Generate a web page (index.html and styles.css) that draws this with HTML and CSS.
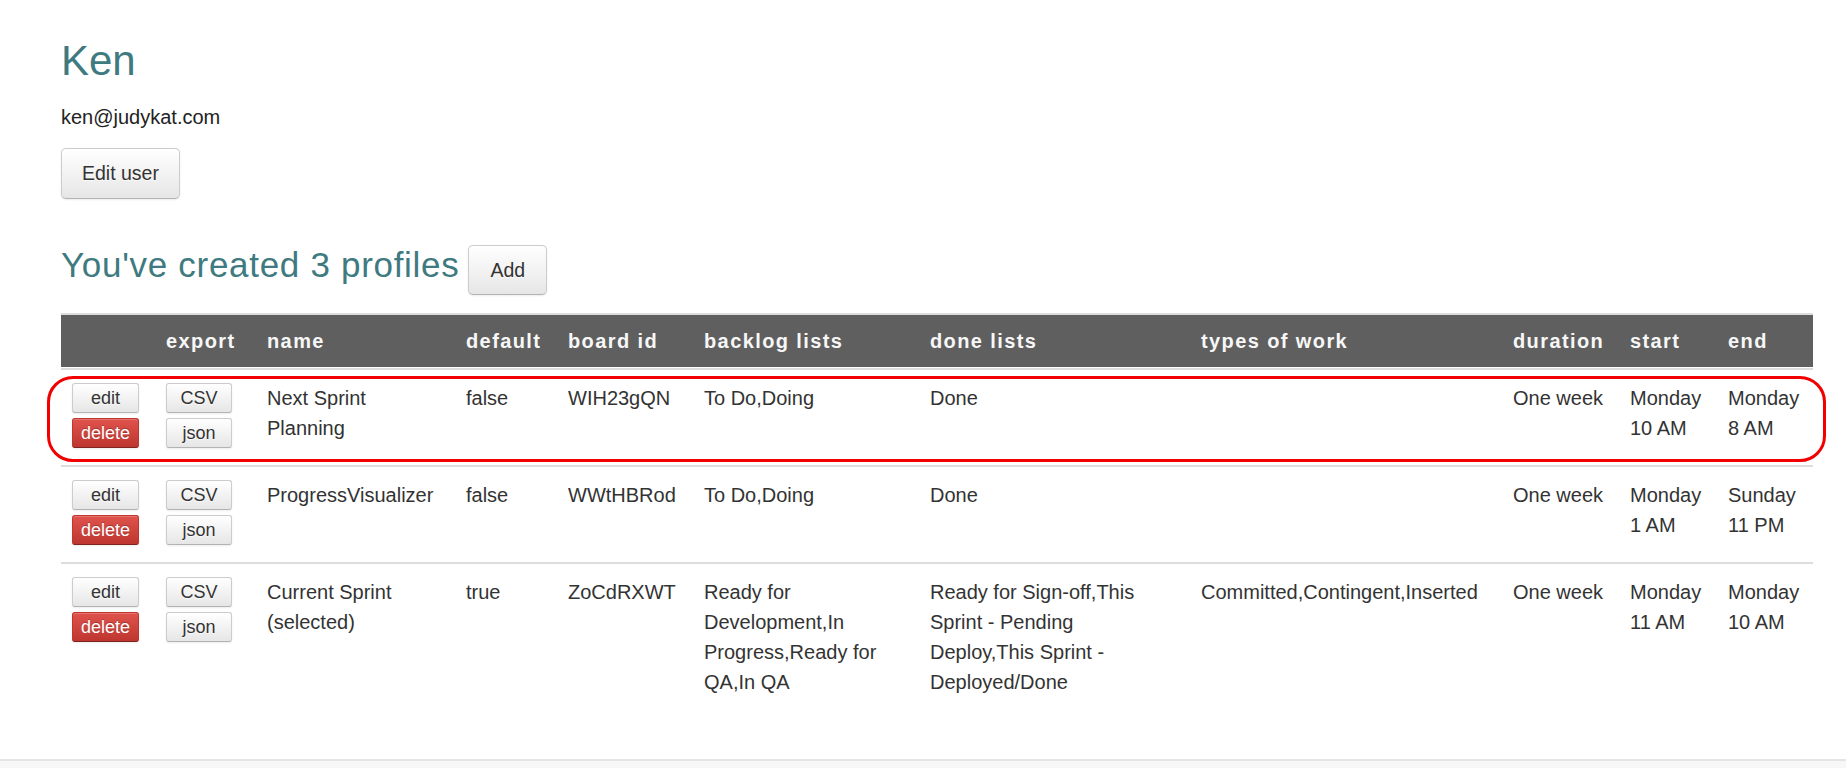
FILE: index.html
```html
<!DOCTYPE html>
<html lang="en">
<head>
<meta charset="utf-8">
<title>Ken - profiles</title>
<link rel="stylesheet" href="styles.css">
</head>
<body>
<div class="page">
  <h1 class="user-name">Ken</h1>
  <p class="email">ken@judykat.com</p>
  <button class="btn btn-lg">Edit user</button>

  <div class="profiles-head">
    <h2 class="profiles-title">You've created 3 profiles</h2>
    <button class="btn btn-lg">Add</button>
  </div>

  <div class="table-wrap">
    <table class="profiles">
      <colgroup>
        <col class="c-actions">
        <col class="c-export">
        <col class="c-name">
        <col class="c-default">
        <col class="c-board">
        <col class="c-backlog">
        <col class="c-done">
        <col class="c-types">
        <col class="c-duration">
        <col class="c-start">
        <col class="c-end">
      </colgroup>
      <thead>
        <tr>
          <th></th>
          <th>export</th>
          <th>name</th>
          <th>default</th>
          <th>board id</th>
          <th>backlog lists</th>
          <th>done lists</th>
          <th>types of work</th>
          <th>duration</th>
          <th>start</th>
          <th>end</th>
        </tr>
      </thead>
      <tbody>
        <tr>
          <td><div class="stack"><button class="btn btn-sm">edit</button><button class="btn btn-sm btn-danger">delete</button></div></td>
          <td><div class="stack"><button class="btn btn-sm btn-export">CSV</button><button class="btn btn-sm btn-export">json</button></div></td>
          <td>Next Sprint<br>Planning</td>
          <td>false</td>
          <td>WIH23gQN</td>
          <td>To Do,Doing</td>
          <td>Done</td>
          <td></td>
          <td>One week</td>
          <td>Monday<br>10 AM</td>
          <td>Monday<br>8 AM</td>
        </tr>
        <tr>
          <td><div class="stack"><button class="btn btn-sm">edit</button><button class="btn btn-sm btn-danger">delete</button></div></td>
          <td><div class="stack"><button class="btn btn-sm btn-export">CSV</button><button class="btn btn-sm btn-export">json</button></div></td>
          <td>ProgressVisualizer</td>
          <td>false</td>
          <td>WWtHBRod</td>
          <td>To Do,Doing</td>
          <td>Done</td>
          <td></td>
          <td>One week</td>
          <td>Monday<br>1 AM</td>
          <td>Sunday<br>11 PM</td>
        </tr>
        <tr>
          <td><div class="stack"><button class="btn btn-sm">edit</button><button class="btn btn-sm btn-danger">delete</button></div></td>
          <td><div class="stack"><button class="btn btn-sm btn-export">CSV</button><button class="btn btn-sm btn-export">json</button></div></td>
          <td>Current Sprint<br>(selected)</td>
          <td>true</td>
          <td>ZoCdRXWT</td>
          <td>Ready for<br>Development,In<br>Progress,Ready for<br>QA,In QA</td>
          <td>Ready for Sign-off,This<br>Sprint - Pending<br>Deploy,This Sprint -<br>Deployed/Done</td>
          <td>Committed,Contingent,Inserted</td>
          <td>One week</td>
          <td>Monday<br>11 AM</td>
          <td>Monday<br>10 AM</td>
        </tr>
      </tbody>
    </table>
    <div class="highlight"></div>
  </div>
</div>
<footer class="footer"></footer>
</body>
</html>
```
FILE: styles.css
```css
html, body {
  margin: 0;
  padding: 0;
  background: #fff;
}
body {
  font-family: "Liberation Sans", Arial, sans-serif;
  font-size: 20px;
  line-height: 30px;
  color: #333;
  overflow: hidden;
}
.page {
  padding: 38px 0 0 61px;
  width: 1752px;
}
.user-name {
  margin: 0;
  font-size: 42px;
  line-height: 46px;
  font-weight: normal;
  color: #3e7a80;
}
.email {
  margin: 18px 0 0;
  font-size: 20px;
  line-height: 30px;
  color: #222;
}
.btn {
  display: inline-block;
  box-sizing: border-box;
  font-family: inherit;
  color: #333;
  text-align: center;
  background-color: #f5f5f5;
  background-image: linear-gradient(#ffffff, #e6e6e6);
  border: 1px solid #cccccc;
  border-bottom-color: #b3b3b3;
  box-shadow: inset 0 1px 0 rgba(255,255,255,.2), 0 1px 2px rgba(0,0,0,.08);
  text-shadow: 0 1px 1px rgba(255,255,255,.75);
  cursor: pointer;
  padding: 0;
}
.btn-lg {
  display: block;
  margin-top: 16px;
  height: 51px;
  padding: 0 20px;
  font-size: 19.5px;
  line-height: 49px;
  border-radius: 5px;
}
.profiles-head {
  display: flex;
  align-items: baseline;
  gap: 9px;
  margin-top: 44px;
}
.profiles-head .btn-lg {
  margin-top: 0;
  height: 50px;
  line-height: 48px;
  padding: 0 21px;
}
.profiles-title {
  margin: 0;
  font-size: 35px;
  line-height: 44px;
  letter-spacing: 0.7px;
  font-weight: normal;
  color: #3e7a80;
}
.table-wrap {
  position: relative;
  margin-top: 18px;
  width: 1752px;
}
.profiles {
  width: 1752px;
  table-layout: fixed;
  border-collapse: separate;
  border-spacing: 0;
}
.c-actions { width: 94px; }
.c-export { width: 101px; }
.c-name { width: 199px; }
.c-default { width: 102px; }
.c-board { width: 136px; }
.c-backlog { width: 226px; }
.c-done { width: 271px; }
.c-types { width: 312px; }
.c-duration { width: 117px; }
.c-start { width: 98px; }
.c-end { width: 96px; }
.profiles th {
  height: 52px;
  padding: 0 0 0 11px;
  background: #5f5f5f;
  color: #f7f7f7;
  text-align: left;
  font-weight: bold;
  font-size: 20px;
  letter-spacing: 1.4px;
  border-top: 2px solid #dddddd;
  border-bottom: 1px solid #ffffff;
  white-space: nowrap;
  vertical-align: middle;
}
.profiles td {
  padding: 13px 0 17px 11px;
  border-top: 2px solid #dddddd;
  vertical-align: top;
  white-space: nowrap;
  text-align: left;
}
.stack {
  display: flex;
  flex-direction: column;
  gap: 5px;
  align-items: flex-start;
}
.btn-sm {
  width: 67px;
  height: 30px;
  font-size: 18px;
  line-height: 28px;
  border-radius: 3px;
}
.btn-sm.btn-export {
  width: 66px;
}
.btn-danger {
  color: #fff;
  background-color: #da4f49;
  background-image: linear-gradient(#e0534d, #bd362f);
  border-color: #bd362f #bd362f #802420;
  text-shadow: 0 -1px 0 rgba(0,0,0,.25);
}
.highlight {
  position: absolute;
  left: -14px;
  top: 63px;
  width: 1779px;
  height: 86px;
  box-sizing: border-box;
  border: 3px solid #f20000;
  border-radius: 26px;
  pointer-events: none;
}
.footer {
  margin-top: 45px;
  height: 80px;
  border-top: 2px solid #e5e5e5;
  background: #f7f7f7;
}
```
